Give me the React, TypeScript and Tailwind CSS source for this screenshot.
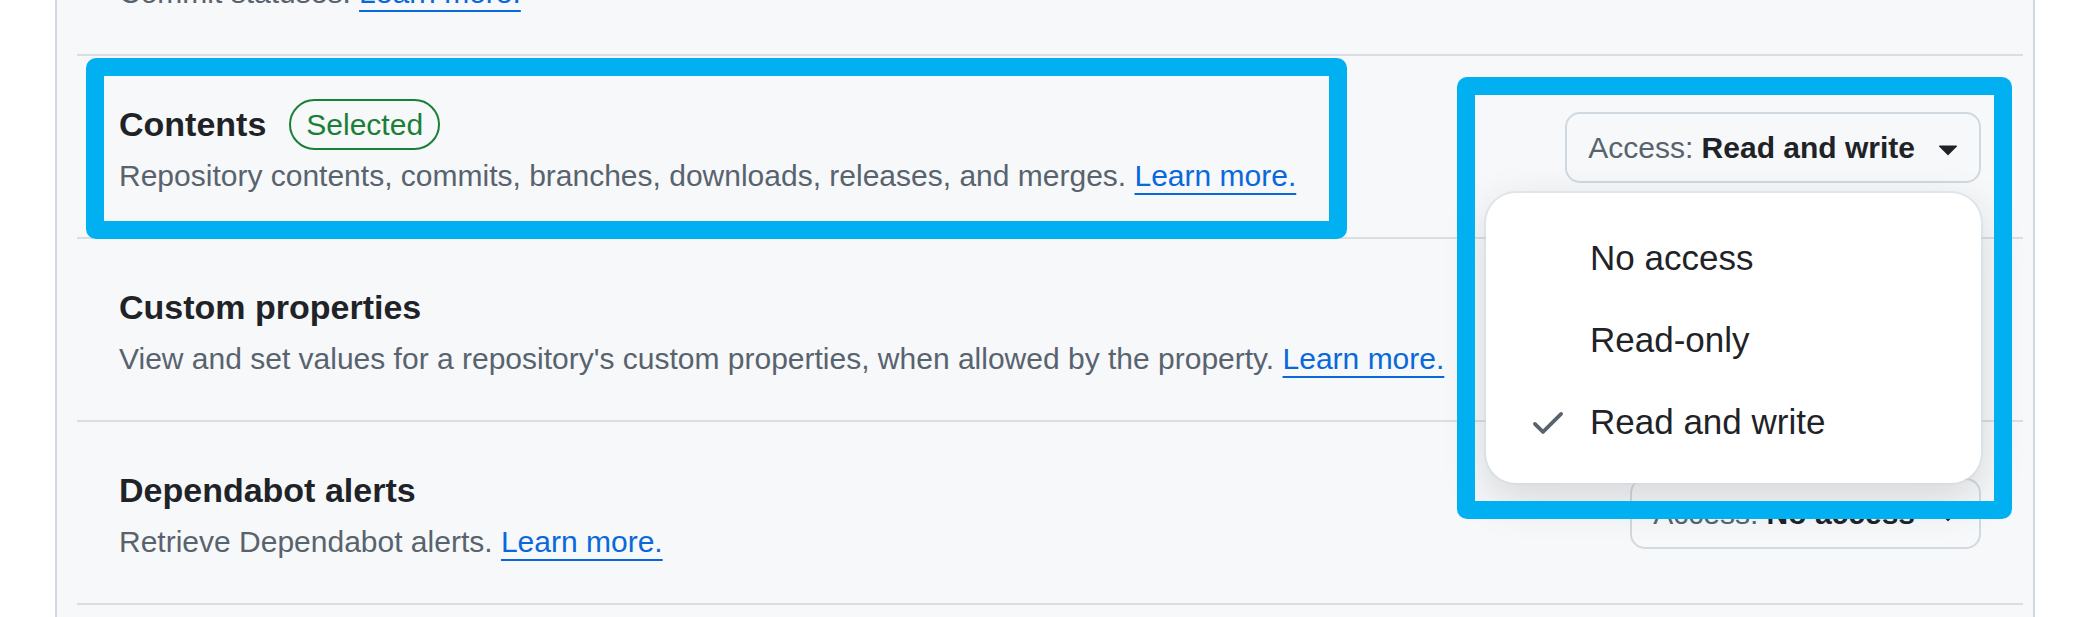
type Row = {
  title: string;
  desc: string;
  access: string;
  selected?: boolean;
  open?: boolean;
};

const rows: Row[] = [
  { title: "Commit statuses", desc: "Commit statuses.", access: "No access" },
  {
    title: "Contents",
    desc: "Repository contents, commits, branches, downloads, releases, and merges.",
    access: "Read and write",
    selected: true,
    open: true,
  },
  {
    title: "Custom properties",
    desc: "View and set values for a repository's custom properties, when allowed by the property.",
    access: "No access",
  },
  { title: "Dependabot alerts", desc: "Retrieve Dependabot alerts.", access: "No access" },
  { title: "Dependabot secrets", desc: "Dependabot secrets.", access: "No access" },
];

const options = ["No access", "Read-only", "Read and write"];

const TriangleDown = () => (
  <svg viewBox="0 0 16 16" className="h-[40px] w-[40px] fill-[#1f2328]">
    <path d="m4.427 7.427 3.396 3.396a.25.25 0 0 0 .354 0l3.396-3.396A.25.25 0 0 0 11.396 7H4.604a.25.25 0 0 0-.177.427Z" />
  </svg>
);

const Check = () => (
  <svg viewBox="0 0 16 16" className="h-[40px] w-[40px] fill-[#59636e]">
    <path d="M13.78 4.22a.75.75 0 0 1 0 1.06l-7.25 7.25a.75.75 0 0 1-1.06 0L2.22 9.28a.751.751 0 0 1 .018-1.042.751.751 0 0 1 1.042-.018L6 10.94l6.72-6.72a.75.75 0 0 1 1.06 0Z" />
  </svg>
);

const AccessMenu = ({ value }: { value: string }) => (
  <ul className="absolute right-0 top-[calc(100%+10px)] z-10 w-[495px] rounded-[30px] bg-white pt-6 pb-5 shadow-[0_0_0_2px_rgba(209,217,224,0.5),0_15px_45px_rgba(37,41,46,0.16)]">
    {options.map((opt) => (
      <li key={opt} className="flex h-[82px] items-center gap-[22px] pl-[42px]">
        <span className="flex h-[40px] w-[40px] items-center justify-center">
          {opt === value && <Check />}
        </span>
        <span className="text-[35px] text-[#1f2328]">{opt}</span>
      </li>
    ))}
  </ul>
);

const PermissionRow = ({ title, desc, access, selected, open }: Row) => (
  <li className="flex h-[183px] shrink-0 items-center justify-between border-b-2 border-[#d8dee4] px-[42px] pt-[2px]">
    <div>
      <div className="flex h-[51px] items-center gap-[23px]">
        <h3 className="text-[34px] font-bold text-[#1f2328]">{title}</h3>
        {selected && (
          <span className="flex h-[51px] items-center rounded-full border-2 border-[#1a7f37] px-[15px] text-[30px] text-[#1a7f37]">
            Selected
          </span>
        )}
      </div>
      <p className="mt-[6px] text-[30px] leading-[40px] text-[#59636e]">
        {desc}{" "}
        <a className="text-[#0969da] underline decoration-2 underline-offset-[7px]">Learn more.</a>
      </p>
    </div>
    <div className="relative">
      <button className="flex h-[71px] items-center gap-[13px] rounded-[15px] border-2 border-[#d1d9e0] bg-[#f6f8fa] pl-[21px] pr-[11px] text-[30px]">
        <span>
          <span className="text-[#59636e]">Access:</span>{" "}
          <span className="font-bold text-[#1f2328]">{access}</span>
        </span>
        <TriangleDown />
      </button>
      {open && <AccessMenu value={access} />}
    </div>
  </li>
);

export default function App() {
  return (
    <div className="relative h-[617px] w-[2096px] overflow-hidden bg-white font-['Liberation_Sans',Arial,sans-serif]">
      <div className="ml-[55px] flex h-full w-[1980px] flex-col border-x-2 border-[#d1d9e0] bg-[#f6f8fa] pl-[20px] pr-[10px]">
        <ul className="mt-[-127px] flex flex-col">
          {rows.map((r) => (
            <PermissionRow key={r.title} {...r} />
          ))}
        </ul>
      </div>

      {/* annotation highlights */}
      <div className="pointer-events-none absolute left-[86px] top-[58px] z-20 h-[181px] w-[1261px] rounded-[10px] border-[18px] border-[#00b0f0]" />
      <div className="pointer-events-none absolute left-[1457px] top-[77px] z-20 h-[442px] w-[555px] rounded-[10px] border-[18px] border-[#00b0f0]" />
    </div>
  );
}
